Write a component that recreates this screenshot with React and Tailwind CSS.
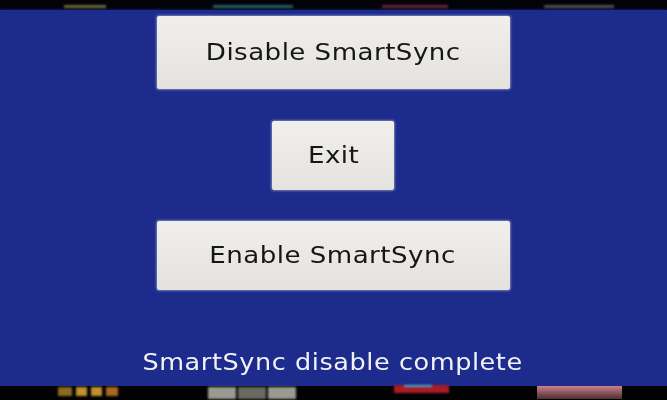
const topIcons = [
  { w: 42, ml: 64, c: "bg-[#6a6a34]" },
  { w: 80, ml: 107, c: "bg-[#24605c]" },
  { w: 66, ml: 89, c: "bg-[#6a2434]" },
  { w: 70, ml: 96, c: "bg-[#50505a]" },
];

function SyncButton({ label, className }) {
  return (
    <button
      className={`flex items-center justify-center rounded-[3px] bg-gradient-to-b from-[#f1efeb] to-[#e4e2de] border border-[#5c64a8] shadow-[0_0_2px_#8088c0] text-[23px] tracking-[0.4px] text-[#161616] ${className}`}
    >
      <span className="inline-block scale-x-[1.135]">{label}</span>
    </button>
  );
}

export default function App() {
  return (
    <div className="w-[667px] h-[400px] overflow-hidden flex flex-col bg-black font-['DejaVu_Sans','Noto_Sans',sans-serif]">
      {/* icons behind the dialog, top row */}
      <div className="h-[10px] flex items-start bg-[#020208]">
        {topIcons.map((s, i) => (
          <div
            key={i}
            className={`h-[3px] mt-[5px] blur-[1px] ${s.c}`}
            style={{ width: s.w, marginLeft: s.ml }}
          />
        ))}
      </div>

      <div className="h-[376px] flex flex-col items-center bg-[#1c2b8c] pt-[5px] pr-[1px] shadow-[0_0_3px_#1c2b8c]">
        <SyncButton label="Disable SmartSync" className="w-[355px] h-[75px]" />
        <SyncButton label="Exit" className="w-[124px] h-[71px] mt-[30px] pl-[2px]" />
        <SyncButton label="Enable SmartSync" className="w-[355px] h-[71px] mt-[29px]" />
        <p className="mt-[56px] text-[22.5px] leading-[30px] tracking-[0.5px] text-[#f2f2f6] scale-x-[1.135]">
          SmartSync disable complete
        </p>
      </div>

      {/* icons behind the dialog, bottom row */}
      <div className="h-[14px] flex items-start bg-[#020202]">
        <div className="ml-[58px] mt-[1px] flex gap-[4px] w-[66px] h-[9px] blur-[1px]">
          <div className="w-[14px] bg-[#8a6a20]" />
          <div className="w-[11px] bg-[#c09030]" />
          <div className="w-[11px] bg-[#c09030]" />
          <div className="w-[12px] bg-[#a86a20]" />
        </div>
        <div className="ml-[84px] mt-[1px] flex gap-[2px] w-[88px] h-[12px] blur-[1px]">
          <div className="flex-1 bg-[#9a9a90]" />
          <div className="flex-1 bg-[#6a6a60]" />
          <div className="flex-1 bg-[#9a9a90]" />
        </div>
        <div className="ml-[98px] mt-[-1px] flex flex-col w-[55px] h-[8px] blur-[1px] bg-[#a81c28]">
          <div className="ml-[10px] w-[28px] h-[2px] bg-[#50b0c8]" />
        </div>
        <div className="ml-[88px] w-[85px] h-[13px] blur-[0.5px] bg-gradient-to-b from-[#d08088] to-[#4a3034]" />
      </div>
    </div>
  );
}
